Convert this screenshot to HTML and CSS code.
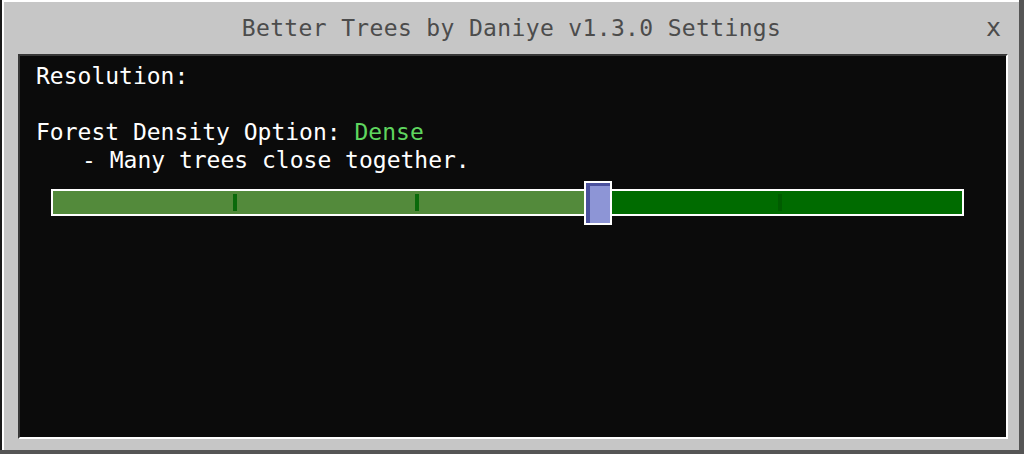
FILE: index.html
```html
<!DOCTYPE html>
<html lang="en">
<head>
  <meta charset="UTF-8" />
  <title>Better Trees Settings</title>
  <meta name="viewport" content="width=device-width, initial-scale=1.0"/>
  <link rel="stylesheet" href="styles.css">
</head>
<body>
  <div class="window">
    <div class="title-bar">
      <span class="title">Better Trees by Daniye v1.3.0 Settings</span>
      <span class="close">x</span>
    </div>

    <div class="content">
      <p class="label">Resolution:</p>

      <p class="label option">Forest Density Option: <span class="value">Dense</span></p>
      <p class="label hint">- Many trees close together.</p>

      <div class="slider">
        <div class="fill" style="width: 60%"></div>
        <span class="tick" style="left: 20%"></span>
        <span class="tick" style="left: 40%"></span>
        <span class="tick tick-dark" style="left: 80%"></span>
        <span class="thumb" style="left: 60%"></span>
      </div>
    </div>
  </div>
</body>
</html>
```

FILE: styles.css
```css
:root {
  --panel: #c6c6c6;
  --panel-dark: #555555;
  --screen: #0b0b0b;
  --text: #ffffff;
  --title: #4c4c4c;
  --green-on: #5fd65f;
  --fill: #538a3b;
  --track: #006b00;
}

* {
  box-sizing: border-box;
}

body {
  margin: 0;
  background: var(--panel-dark);
  font-family: "DejaVu Sans Mono", "Liberation Mono", monospace;
  font-size: 23px;
}

.window {
  width: 1017px;
  height: 450px;
  background: var(--panel);
  border-left: 2px solid #fff;
  border-top: 2px solid #fff;
  box-shadow: -2px 0 0 #1a1a1a;
  margin-left: 2px;
  display: flex;
  flex-direction: column;
  padding: 0 11px 11px 14px;
}

.title-bar {
  height: 52px;
  display: flex;
  align-items: center;
  justify-content: center;
  position: relative;
  color: var(--title);
}

.title {
  letter-spacing: 0.35px;
  margin-right: 3px;
}

.close {
  position: absolute;
  right: 7px;
  top: 11px;
  font-size: 25px;
  color: #4c4c4c;
}

.content {
  flex: 1;
  background: var(--screen);
  border: 2px solid;
  border-color: #373737 #fff #fff #373737;
  padding: 8px 16px;
  color: var(--text);
}

.label {
  margin: 0;
  line-height: 24px;
}

.option {
  margin-top: 32px;
}

.hint {
  padding-left: 46px;
  margin-top: 4px;
}

.value {
  color: var(--green-on);
}

/* density slider */
.slider {
  position: relative;
  margin: 17px 0 0 15px;
  width: 913px;
  height: 27px;
  border: 2px solid #fff;
  background: var(--track);
}

.fill {
  height: 100%;
  background: var(--fill);
}

.tick {
  position: absolute;
  top: 3px;
  width: 4px;
  height: 17px;
  margin-left: -2px;
  background: #0a6a0a;
}

.tick-dark {
  background: #005c00;
}

.thumb {
  position: absolute;
  top: -10px;
  width: 28px;
  height: 44px;
  margin-left: -14px;
  border: 2px solid #fff;
  background: #8d95d6;
  box-shadow: inset 4px 3px 0 #4b519d;
}
```
